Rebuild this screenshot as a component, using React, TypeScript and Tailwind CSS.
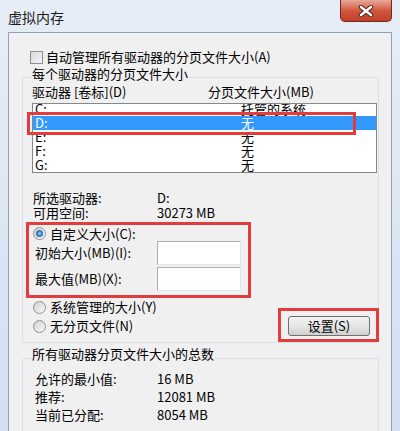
import React from 'react';

function Radio({ checked }: { checked?: boolean }) {
  return (
    <span className="w-[13px] h-[13px] rounded-full border border-[#8e8f8f] bg-linear-to-br from-[#cfcfcf] to-[#fbfbfb] flex items-center justify-center shrink-0">
      {checked && <span className="w-[7px] h-[7px] rounded-full bg-radial from-[#9fd6f6] via-[#2a7fc4] to-[#0e4c86]" />}
    </span>
  );
}

function Input() {
  return <div className="w-[84px] h-[24px] bg-white border border-[#abadb3] border-r-[#e3e9ef] border-b-[#e3e9ef]" />;
}

const drives = [
  { d: 'C:', s: '托管的系统' },
  { d: 'D:', s: '无', sel: true },
  { d: 'E:', s: '无' },
  { d: 'F:', s: '无' },
  { d: 'G:', s: '无' },
];

export default function App() {
  return (
    <div className="relative w-[400px] h-[431px] overflow-hidden bg-linear-to-b from-[#e6edf6] to-[#d3dfed] text-black text-[13px] leading-[16px] font-['Noto_Sans_CJK_SC',sans-serif]">
      {/* title bar */}
      <div className="h-[32px] flex justify-between">
        <div className="pl-[8px] pt-[8px] text-[14px] leading-[18px] text-[#1a1a1a]">虚拟内存</div>
        <div className="mr-[8px] w-[52px] h-[22px] rounded-b-[5px] border border-t-0 border-[#6e2a22] bg-linear-to-b from-[#e9a99b] via-[#d2573f] to-[#c23f2a] flex items-center justify-center">
          <svg width="16" height="12" viewBox="0 0 16 12">
            <path d="M3 2 L13 10 M13 2 L3 10" stroke="#4a1f1a" strokeWidth="4.4" strokeLinecap="round" />
            <path d="M3 2 L13 10 M13 2 L3 10" stroke="#ffffff" strokeWidth="2.6" strokeLinecap="round" />
          </svg>
        </div>
      </div>

      {/* panel */}
      <div className="mx-[8px] h-[420px] border border-[#8fa1b6] bg-[#f0f0f0]">
        <div className="mt-[16px] ml-[21px] h-[16px] flex items-center gap-[3px]">
          <span className="w-[13px] h-[13px] border border-[#8f8f8f] bg-linear-to-br from-[#d9d9d9] to-[#f4f4f4] shrink-0" />
          <span>自动管理所有驱动器的分页文件大小(A)</span>
        </div>

        {/* group 1 */}
        <div className="mt-[12px] ml-[13px] w-[357px] border border-[#d5dfe5] rounded-[3px] pb-[6px]">
          <div className="-mt-[12px] ml-[8px] w-fit px-[1px] bg-[#f0f0f0] h-[16px]">每个驱动器的分页文件大小</div>
          <div className="mt-[2px] ml-[9px] h-[16px] flex">
            <span className="w-[176px]">驱动器 [卷标](D)</span>
            <span>分页文件大小(MB)</span>
          </div>
          <div className="mt-[3px] ml-[9px] w-[345px] h-[70px] border border-[#828790] bg-white overflow-hidden">
            <div className="-mt-[2px]">
              {drives.map((r) => (
                <div key={r.d} className={`h-[14px] leading-[14px] flex ${r.sel ? 'bg-[#3399ff] text-white' : ''}`}>
                  <span className="pl-[2px] w-[208px]">{r.d}</span>
                  <span>{r.s}</span>
                </div>
              ))}
            </div>
          </div>

          <div className="mt-[17px] ml-[10px] h-[15px] leading-[15px] flex">
            <span className="w-[124px]">所选驱动器:</span>
            <span>D:</span>
          </div>
          <div className="ml-[10px] h-[15px] leading-[15px] flex">
            <span className="w-[124px]">可用空间:</span>
            <span>30273 MB</span>
          </div>

          <div className="mt-[6px] ml-[10px] h-[15px] flex items-center gap-[4px]">
            <Radio checked />
            <span>自定义大小(C):</span>
          </div>
          <div className="ml-[12px] h-[24px] flex items-center">
            <span className="w-[122px]">初始大小(MB)(I):</span>
            <Input />
          </div>
          <div className="mt-[2px] ml-[12px] h-[24px] flex items-center">
            <span className="w-[122px]">最大值(MB)(X):</span>
            <Input />
          </div>

          <div className="mt-[8px] ml-[10px] h-[16px] flex items-center gap-[4px]">
            <Radio />
            <span>系统管理的大小(Y)</span>
          </div>
          <div className="mt-[1px] ml-[10px] mr-[8px] h-[20px] flex items-center justify-between">
            <div className="flex items-center gap-[4px]">
              <Radio />
              <span>无分页文件(N)</span>
            </div>
            <div className="w-[82px] h-[20px] rounded-[3px] border border-[#707070] bg-linear-to-b from-[#f3f3f3] via-[#e6e6e6] to-[#cfcfcf] flex items-center justify-center">
              设置(S)
            </div>
          </div>
        </div>

        {/* group 2 */}
        <div className="mt-[15px] ml-[13px] w-[357px] h-[90px] border border-[#d5dfe5] rounded-[3px]">
          <div className="-mt-[13px] ml-[8px] w-fit px-[1px] bg-[#f0f0f0] h-[16px]">所有驱动器分页文件大小的总数</div>
          <div className="mt-[8px] ml-[12px]">
            {[
              ['允许的最小值:', '16 MB'],
              ['推荐:', '12081 MB'],
              ['当前已分配:', '8054 MB'],
            ].map(([k, v]) => (
              <div key={k} className="h-[18px] flex items-center">
                <span className="w-[122px]">{k}</span>
                <span>{v}</span>
              </div>
            ))}
          </div>
        </div>
      </div>

      {/* red annotation boxes */}
      <div className="absolute left-[27px] top-[112px] w-[329px] h-[23px] border-[3px] border-[#e23c3c]" />
      <div className="absolute left-[26px] top-[222px] w-[225px] h-[76px] border-[3px] border-[#e23c3c]" />
      <div className="absolute left-[278px] top-[308px] w-[101px] h-[34px] border-[3px] border-[#e23c3c]" />
    </div>
  );
}
